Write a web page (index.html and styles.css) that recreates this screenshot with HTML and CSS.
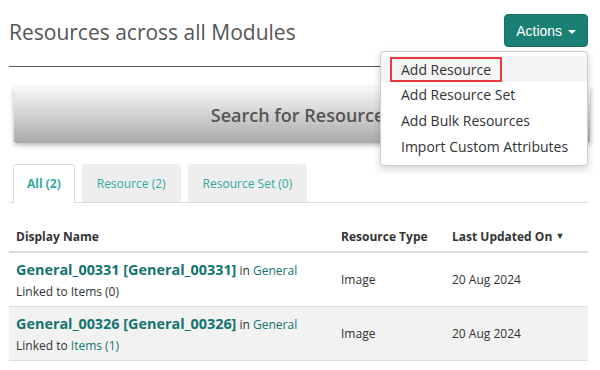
FILE: index.html
```html
<!DOCTYPE html>
<html lang="en">
<head>
    <meta charset="UTF-8">
    <meta name="viewport" content="width=device-width, initial-scale=1.0">
    <title>Resources across all Modules</title>
    <link rel="stylesheet" href="styles.css">
</head>
<body>
    <div class="page">
        <div class="page-header">
            <h1>Resources across all Modules</h1>
            <div class="actions">
                <button class="btn-actions" type="button">Actions <span class="caret"></span></button>
                <ul class="dropdown">
                    <li class="active"><a href="#"><span class="focus">Add Resource</span></a></li>
                    <li><a href="#">Add Resource Set</a></li>
                    <li><a href="#">Add Bulk Resources</a></li>
                    <li><a href="#">Import Custom Attributes</a></li>
                </ul>
            </div>
        </div>

        <div class="search-bar">Search for Resources</div>

        <ul class="tabs">
            <li class="tab current">All (2)</li>
            <li class="tab">Resource (2)</li>
            <li class="tab">Resource Set (0)</li>
        </ul>

        <table class="resources">
            <thead>
                <tr>
                    <th class="col-name">Display Name</th>
                    <th class="col-type">Resource Type</th>
                    <th class="col-date">Last Updated On <span class="sort">&#9660;</span></th>
                </tr>
            </thead>
            <tbody>
                <tr>
                    <td>
                        <div class="res-title"><a href="#">General_00331 [General_00331]</a> <span class="in">in <a href="#">General</a></span></div>
                        <div class="linked">Linked to Items (0)</div>
                    </td>
                    <td>Image</td>
                    <td>20 Aug 2024</td>
                </tr>
                <tr class="alt">
                    <td>
                        <div class="res-title"><a href="#">General_00326 [General_00326]</a> <span class="in">in <a href="#">General</a></span></div>
                        <div class="linked">Linked to <a href="#">Items (1)</a></div>
                    </td>
                    <td>Image</td>
                    <td>20 Aug 2024</td>
                </tr>
            </tbody>
        </table>
    </div>
</body>
</html>
```

FILE: styles.css
```css
body {
    font-family: 'Open Sans', sans-serif;
    margin: 0;
    padding: 0;
    color: #333;
    background-color: #fff;
}
a {
    color: #137470;
    text-decoration: none;
}
.page {
    padding: 14px 12px 0 9px;
}
.page-header {
    display: flex;
    justify-content: space-between;
    align-items: center;
    height: 33px;
    padding-bottom: 19px;
    border-bottom: 1px solid #555;
}
h1 {
    margin: 2px 0 0;
    font-size: 21px;
    font-weight: 400;
    color: #555;
}
.actions {
    position: relative;
}
.btn-actions {
    background-color: #1b8074;
    color: #fff;
    border: 1px solid #176e64;
    border-radius: 4px;
    height: 33px;
    padding: 0 11px;
    font-family: 'Liberation Sans', Arial, sans-serif;
    font-size: 14px;
}
.caret {
    display: inline-block;
    width: 0;
    height: 0;
    margin-left: 2px;
    vertical-align: middle;
    border-top: 4px solid #fff;
    border-left: 4px solid transparent;
    border-right: 4px solid transparent;
}
.dropdown {
    position: absolute;
    top: 37px;
    right: 0;
    width: 206px;
    margin: 0;
    padding: 4px 0 5px;
    list-style: none;
    background: #fff;
    border: 1px solid #ccc;
    border-radius: 4px;
    box-shadow: 0 3px 8px rgba(0, 0, 0, 0.18);
    z-index: 10;
}
.dropdown li a {
    display: block;
    height: 26px;
    line-height: 26px;
    padding-left: 20px;
    font-size: 14px;
    color: #333;
    white-space: nowrap;
}
.dropdown li.active a {
    background-color: #f5f5f5;
    height: 26px;
    padding-left: 9px;
}
.focus {
    display: inline-block;
    height: 21px;
    line-height: 21px;
    margin-top: 1px;
    padding: 0 9px 0 9px;
    border: 2px solid #ea3a3f;
}
.search-bar {
    margin: 20px -2px 0 5px;
    height: 56px;
    line-height: 56px;
    text-align: center;
    font-size: 18px;
    font-weight: 600;
    color: #555;
    border-radius: 3px;
    background: linear-gradient(#f9f9f9, #a9a9a9);
    box-shadow: 0 2px 5px rgba(0, 0, 0, 0.3);
}
.tabs {
    display: flex;
    gap: 7px;
    margin: 21px 0 0;
    padding: 0 0 0 4px;
    list-style: none;
    border-bottom: 1px solid #ddd;
}
.tab {
    height: 37px;
    line-height: 37px;
    padding: 0 14px;
    font-size: 12px;
    color: #30aba3;
    background-color: #eee;
    border: 1px solid #eee;
    border-bottom: none;
    border-radius: 4px 4px 0 0;
}
.tab.current {
    background-color: #fff;
    border-color: #ddd;
    font-weight: 700;
    padding: 0 13px;
    margin-bottom: -1px;
    height: 38px;
}
.resources {
    width: 100%;
    margin-top: 25px;
    border-collapse: collapse;
    font-size: 12px;
}
.resources th {
    text-align: left;
    font-weight: 700;
    padding: 0 0 6px 7px;
    border-bottom: 2px solid #ddd;
}
.resources td {
    height: 53px;
    padding: 0 0 0 7px;
    border-bottom: 1px solid #ddd;
}
.col-name {
    width: 318px;
}
.col-type {
    width: 104px;
}
.sort {
    font-size: 9px;
    vertical-align: 2px;
}
.resources tr.alt td {
    background-color: #f2f2f2;
}
.res-title a {
    font-size: 14.4px;
    font-weight: 700;
}
.res-title .in a {
    font-weight: 400;
    font-size: 12px;
}
.linked {
    margin-top: 4px;
}
```
